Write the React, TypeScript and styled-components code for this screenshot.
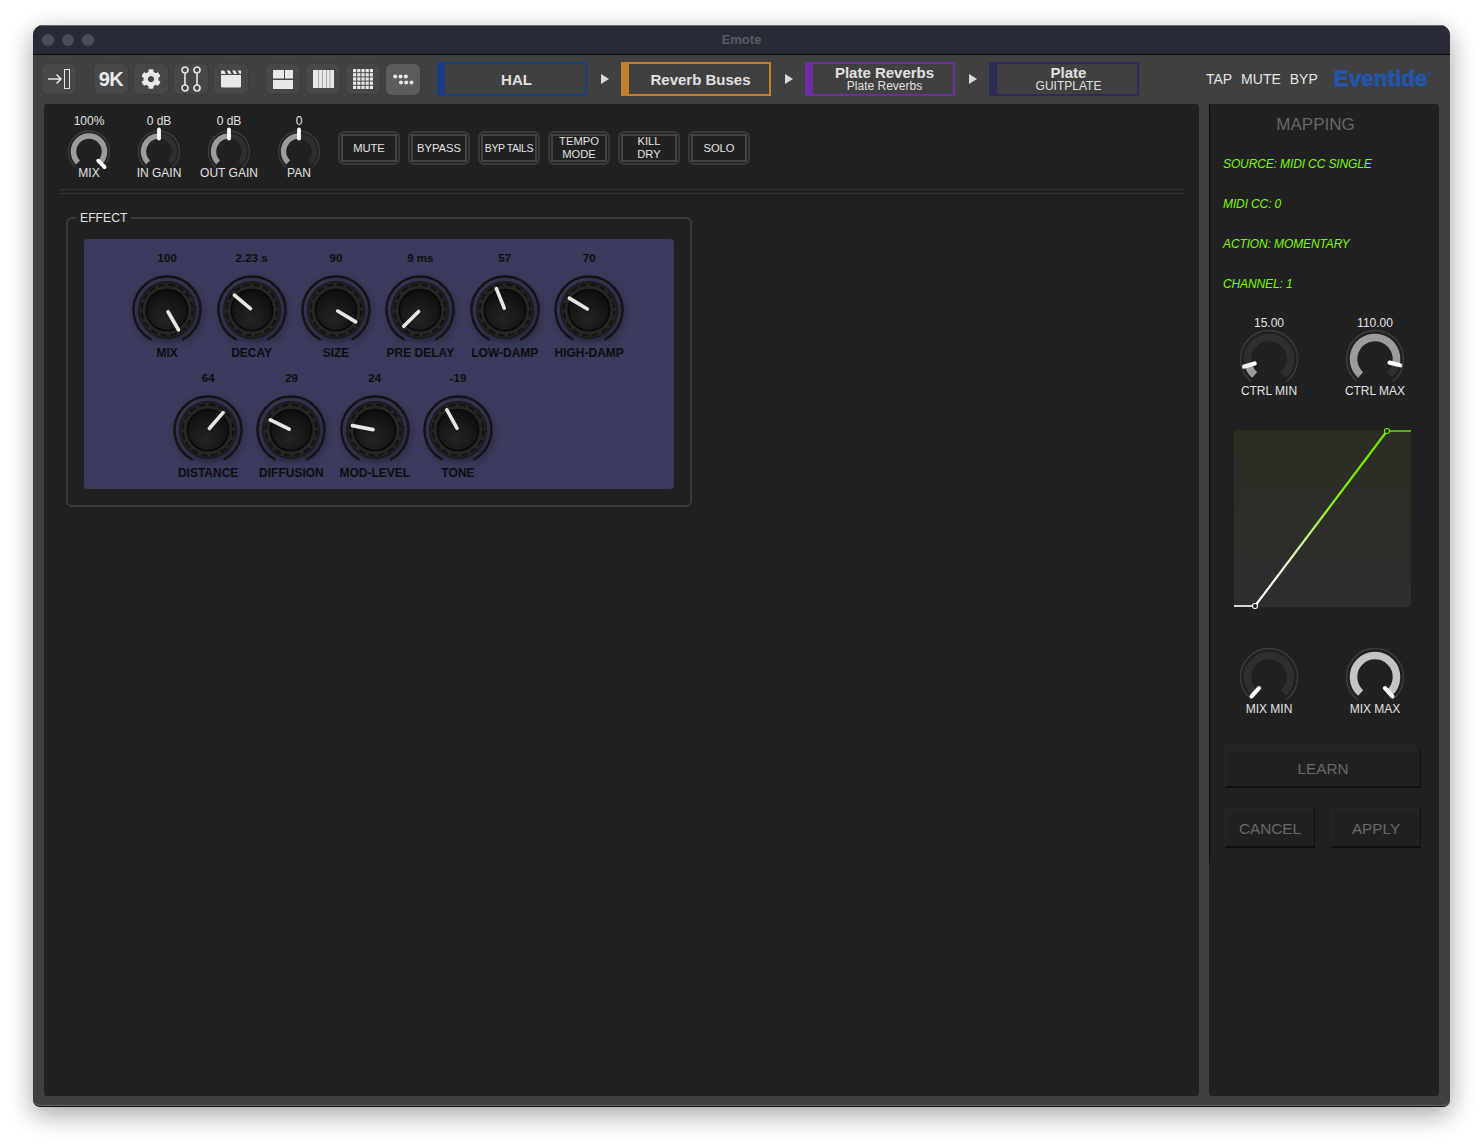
import React from "react";
import styled, { createGlobalStyle } from "styled-components";
import { FaCog } from "react-icons/fa";

const GlobalStyle = createGlobalStyle`
  html, body {
    margin: 0;
    height: 1148px;
    background: #fff;
    overflow: hidden;
    font-family: "Liberation Sans", Arial, sans-serif;
  }
  * { box-sizing: border-box; }
`;

const polar = (cx: number, cy: number, r: number, deg: number) => {
  const a = ((deg - 90) * Math.PI) / 180;
  return [cx + r * Math.cos(a), cy + r * Math.sin(a)];
};

const arc = (cx: number, cy: number, r: number, from: number, to: number) => {
  const [x1, y1] = polar(cx, cy, r, from);
  const [x2, y2] = polar(cx, cy, r, to);
  return `M${x1} ${y1}A${r} ${r} 0 ${to - from > 180 ? 1 : 0} 1 ${x2} ${y2}`;
};

type RingProps = {
  angle: number;
  large?: boolean;
  valueColor?: string;
};

/* flat grey knob used in the top strip and the mapping panel */
function RingKnob({ angle, large, valueColor = "#9c9c9c" }: RingProps) {
  const w = large ? 58 : 42;
  const h = large ? 54 : 38;
  const cx = w / 2;
  const cy = large ? 29 : 23.5;
  const outer = large ? 28.5 : 20.5;
  const mid = large ? 21.5 : 15.5;
  const stroke = large ? 7.5 : 5.5;
  const sweep = large ? 138 : 135;
  const [x1, y1] = polar(cx, cy, large ? 15 : 13, angle);
  const [x2, y2] = polar(cx, cy, large ? 26 : 22, angle);
  return (
    <RingSvg width={w} height={h} viewBox={`0 0 ${w} ${h}`}>
      <path d={arc(cx, cy, outer, -sweep - 4, sweep + 4)} fill="none" stroke="#3c3c3c" strokeWidth="1.4" />
      <path d={arc(cx, cy, mid, -sweep, sweep)} fill="none" stroke="#2f2f2f" strokeWidth={stroke} />
      {angle > -sweep && (
        <path d={arc(cx, cy, mid, -sweep, angle)} fill="none" stroke={valueColor} strokeWidth={stroke} />
      )}
      <line x1={x1} y1={y1} x2={x2} y2={y2} stroke="#fff" strokeWidth={large ? 4.2 : 3.8} strokeLinecap="round" />
    </RingSvg>
  );
}

/* black ribbed hardware knob of the effect panel */
function DialKnob({ angle }: { angle: number }) {
  const id = React.useId();
  const c = 36;
  const [x1, y1] = polar(c, c, 2, angle);
  const [x2, y2] = polar(c, c, 23, angle);
  return (
    <DialSvg width="72" height="72" viewBox="0 0 72 72">
      <defs>
        <radialGradient id={id} cx="45%" cy="70%" r="70%">
          <stop offset="0%" stopColor="#242424" />
          <stop offset="100%" stopColor="#0d0d0d" />
        </radialGradient>
      </defs>
      <path d={arc(c, c, 33.5, -151, 151)} fill="none" stroke="#141414" strokeWidth="2.4" strokeLinecap="round" />
      <circle cx={c} cy={c} r="29" fill="#1b1b1b" />
      <circle cx={c} cy={c} r="24.6" fill="none" stroke="#252525" strokeWidth="5.5" />
      <circle cx={c} cy={c} r="25.4" fill="none" stroke="#121212" strokeWidth="2" strokeDasharray="6.500 3.500" />
      <circle cx={c} cy={c} r="20.500" fill={`url(#${id})`} stroke="#060606" strokeWidth="1.200" />
      <line x1={x1} y1={y1} x2={x2} y2={y2} stroke="#e6e6e6" strokeWidth="3.6" strokeLinecap="round" />
    </DialSvg>
  );
}

const topKnobs = [
  { value: "100%", label: "MIX", angle: 135 },
  { value: "0 dB", label: "IN GAIN", angle: 0 },
  { value: "0 dB", label: "OUT GAIN", angle: 0 },
  { value: "0", label: "PAN", angle: 0 },
];

const triggers = [
  { label: "MUTE" },
  { label: "BYPASS" },
  { label: "BYP TAILS", tight: true },
  { label: "TEMPO MODE", wrap: true },
  { label: "KILL DRY", wrap: true },
  { label: "SOLO" },
];

const effectRows = [
  [
    { value: "100", label: "MIX", angle: 150 },
    { value: "2.23 s", label: "DECAY", angle: -50 },
    { value: "90", label: "SIZE", angle: 121 },
    { value: "9 ms", label: "PRE DELAY", angle: -135 },
    { value: "57", label: "LOW-DAMP", angle: -22 },
    { value: "70", label: "HIGH-DAMP", angle: -59 },
  ],
  [
    { value: "64", label: "DISTANCE", angle: 41 },
    { value: "29", label: "DIFFUSION", angle: -64 },
    { value: "24", label: "MOD-LEVEL", angle: -79 },
    { value: "-19", label: "TONE", angle: -29 },
  ],
];

const crumbs = [
  { title: "HAL", color: "#1a3c80" },
  { title: "Reverb Buses", color: "#c47f2b" },
  { title: "Plate Reverbs", sub: "Plate Reverbs", color: "#6d2f9f" },
  { title: "Plate", sub: "GUITPLATE", color: "#2b2a58" },
];

const mappingLines = ["SOURCE: MIDI CC SINGLE", "MIDI CC: 0", "ACTION: MOMENTARY", "CHANNEL: 1"];

export default function App() {
  return (
    <Window>
      <GlobalStyle />
      <TitleBar>
        <Lights>
          <Light />
          <Light />
          <Light />
        </Lights>
        <WindowTitle>Emote</WindowTitle>
      </TitleBar>

      <Toolbar>
        <ToolButton>
          <svg width="24" height="22" viewBox="0 0 24 22" fill="none" stroke="#e4e4e4">
            <path d="M1 11h13M9.5 6.5 14 11l-4.500 4.500" strokeWidth="1.5" />
            <rect x="17.500" y="1.500" width="5" height="19" strokeWidth="1" />
          </svg>
        </ToolButton>

        <ToolGroup>
          <ToolButton>
            <NineK>9K</NineK>
          </ToolButton>
          <ToolButton>
            <FaCog size={20} color="#e8e8e8" />
          </ToolButton>
          <ToolButton>
            <svg width="20" height="26" viewBox="0 0 20 26" fill="none" stroke="#e0e0e0" strokeWidth="1.7">
              <circle cx="4" cy="4" r="3" />
              <circle cx="16" cy="4" r="3" />
              <circle cx="4" cy="22" r="3" />
              <circle cx="16" cy="22" r="3" />
              <path d="M4 7v12M16 7v12" />
            </svg>
          </ToolButton>
          <ToolButton>
            <svg width="22" height="18" viewBox="0 0 22 18">
              <path d="M1 5h20v11.500a1 1 0 0 1-1 1H2a1 1 0 0 1-1-1z" fill="#e8e8e8" />
              <path d="M1 .5h20V4H1z" fill="#e8e8e8" />
              <path d="M4 0h2.500l2 4H6zM9.500 0H12l2 4h-2.500zM15 0h2.500l2 4H17z" fill="#444" />
            </svg>
          </ToolButton>
        </ToolGroup>

        <ToolGroup>
          <ToolButton>
            <svg width="20" height="19" viewBox="0 0 20 19" fill="#e8e8e8">
              <rect width="11" height="8.500" />
              <rect x="12" width="8" height="8.500" />
              <rect y="10" width="20" height="9" />
            </svg>
          </ToolButton>
          <ToolButton>
            <svg width="21" height="18" viewBox="0 0 21 18">
              <rect width="21" height="18" fill="#e8e8e8" />
              <path d="M5.500 0v18M9.500 0v18M13.500 0v18M17 0v18" stroke="#a8a8a8" strokeWidth="1" />
            </svg>
          </ToolButton>
          <ToolButton>
            <svg width="20" height="20" viewBox="0 0 20 20" fill="#e8e8e8">
              {[0, 4.200, 8.400, 12.600, 16.800].map((y) =>
                [0, 4.200, 8.400, 12.600, 16.800].map((x) => (
                  <rect key={`${x}-${y}`} x={x} y={y} width="3.200" height="3.200" />
                )),
              )}
            </svg>
          </ToolButton>
          <ToolButton $active>
            <svg width="21" height="11" viewBox="0 0 21 11" fill="#e8e8e8">
              <circle cx="2.200" cy="2.500" r="2" />
              <circle cx="7.500" cy="2.500" r="2" />
              <circle cx="12.800" cy="2.500" r="2" />
              <circle cx="8" cy="8.500" r="2" />
              <circle cx="13.200" cy="8.500" r="2" />
              <circle cx="18.500" cy="8.500" r="2" />
            </svg>
          </ToolButton>
        </ToolGroup>

        <Crumbs>
          {crumbs.map((c, i) => (
            <React.Fragment key={c.title}>
              {i > 0 && (
                <CrumbArrow>
                  <svg width="8" height="10" viewBox="0 0 8 10">
                    <path d="M0 0l8 5-8 5z" fill="#d8d8d8" />
                  </svg>
                </CrumbArrow>
              )}
              <Crumb $color={c.color}>
                <CrumbTitle>{c.title}</CrumbTitle>
                {c.sub && <CrumbSub>{c.sub}</CrumbSub>}
              </Crumb>
            </React.Fragment>
          ))}
        </Crumbs>

        <RightTools>
          <ToolLink>TAP</ToolLink>
          <ToolLink>MUTE</ToolLink>
          <ToolLink>BYP</ToolLink>
          <Logo>
            Eventide<LogoMark>®</LogoMark>
          </Logo>
        </RightTools>
      </Toolbar>

      <Main>
        <LeftPanel>
          <Strip>
            {topKnobs.map((k) => (
              <StripKnob key={k.label}>
                <LightText>{k.value}</LightText>
                <RingKnob angle={k.angle} />
                <LightText>{k.label}</LightText>
              </StripKnob>
            ))}
            <Triggers>
              {triggers.map((t) => (
                <TriggerOuter key={t.label}>
                  <TriggerInner $wrap={t.wrap} $tight={t.tight}>
                    {t.label}
                  </TriggerInner>
                </TriggerOuter>
              ))}
            </Triggers>
          </Strip>
          <Divider />

          <EffectBox>
            <EffectLegend>EFFECT</EffectLegend>
            <EffectPanel>
              {effectRows.map((row, i) => (
                <EffectRow key={i} $second={i === 1}>
                  {row.map((k) => (
                    <EffectKnob key={k.label} $second={i === 1}>
                      <EffectValue>{k.value}</EffectValue>
                      <DialKnob angle={k.angle} />
                      <EffectLabel>{k.label}</EffectLabel>
                    </EffectKnob>
                  ))}
                </EffectRow>
              ))}
            </EffectPanel>
          </EffectBox>
        </LeftPanel>

        <RightPanel>
          <MappingBody>
            <MappingTitle>MAPPING</MappingTitle>
            {mappingLines.map((line) => (
              <MappingLine key={line}>{line}</MappingLine>
            ))}

            <KnobPair>
              <PairKnob>
                <LightText>15.00</LightText>
                <RingKnob large angle={-107} />
                <LightText>CTRL MIN</LightText>
              </PairKnob>
              <PairKnob>
                <LightText>110.00</LightText>
                <RingKnob large angle={104} />
                <LightText>CTRL MAX</LightText>
              </PairKnob>
            </KnobPair>

            <CurveBox>
              <svg width="177" height="177" viewBox="0 0 177 177">
                <defs>
                  <linearGradient id="curveLine" gradientUnits="userSpaceOnUse" x1="21" y1="176" x2="153" y2="1">
                    <stop offset="0%" stopColor="#ffffff" />
                    <stop offset="20%" stopColor="#f0f8e0" />
                    <stop offset="65%" stopColor="#80f000" />
                    <stop offset="100%" stopColor="#70e800" />
                  </linearGradient>
                </defs>
                <path d="M21 176 153 1" fill="none" stroke="url(#curveLine)" strokeWidth="2.200" />
                <path d="M0 176h21" stroke="#fff" strokeWidth="1.600" />
                <path d="M153 1h24" stroke="#78ee00" strokeWidth="1.300" />
                <circle cx="21" cy="176" r="2.500" fill="#111" stroke="#fff" strokeWidth="1.100" />
                <circle cx="153" cy="1" r="2.500" fill="#222" stroke="#78ee00" strokeWidth="1.100" />
              </svg>
            </CurveBox>

            <KnobPair $compact>
              <PairKnob>
                <RingKnob large angle={-138} />
                <LightText>MIX MIN</LightText>
              </PairKnob>
              <PairKnob>
                <RingKnob large angle={138} valueColor="#c4c4c4" />
                <LightText>MIX MAX</LightText>
              </PairKnob>
            </KnobPair>

            <Actions>
              <ActionButton $span>LEARN</ActionButton>
              <ActionButton>CANCEL</ActionButton>
              <ActionButton>APPLY</ActionButton>
            </Actions>
          </MappingBody>
        </RightPanel>
      </Main>
    </Window>
  );
}

const Window = styled.div`
  width: 1417px;
  height: 1081px;
  margin: 25px 0 0 33px;
  display: flex;
  flex-direction: column;
  background: #404040;
  border-radius: 10px 10px 7px 7px;
  overflow: hidden;
  box-shadow: inset 0 -1px 0 #666, 0 1px 0 #111, 0 8px 26px rgba(0, 0, 0, 0.38);
`;

const TitleBar = styled.div`
  height: 30px;
  flex: none;
  padding-bottom: 2px;
  display: flex;
  align-items: center;
  justify-content: center;
  position: relative;
  background: #272b35;
  border-top: 1px solid #6a6a6e;
  border-bottom: 1px solid #0c0c0c;
`;

const Lights = styled.div`
  position: absolute;
  left: 9px;
  top: 8px;
  display: flex;
  gap: 8px;
`;

const Light = styled.span`
  width: 12px;
  height: 12px;
  border-radius: 50%;
  background: #484c57;
`;

const WindowTitle = styled.span`
  font-size: 13px;
  font-weight: 700;
  color: #585b62;
`;

const Toolbar = styled.div`
  height: 49px;
  flex: none;
  padding: 0 18px 1px 8px;
  display: flex;
  align-items: center;
`;

const ToolGroup = styled.div`
  display: flex;
  gap: 4px;
  margin-left: 16px;
`;

const ToolButton = styled.div<{ $active?: boolean }>`
  width: ${(p) => (p.$active ? "34px" : "36px")};
  height: ${(p) => (p.$active ? "31px" : "32px")};
  margin: ${(p) => (p.$active ? "0.5px 0 0 1px" : "0")};
  border-radius: 6px;
  display: flex;
  align-items: center;
  justify-content: center;
  background: ${(p) => (p.$active ? "#5c5c5c" : "#474747")};
  box-shadow: ${(p) => (p.$active ? "none" : "inset 0 0 0 1px #3b3b3b")};
`;

const NineK = styled.span`
  font-size: 20px;
  font-weight: 700;
  letter-spacing: -0.5px;
  color: #e8e8e8;
`;

const Crumbs = styled.div`
  display: flex;
  align-items: center;
  margin-left: 17px;
`;

const Crumb = styled.div<{ $color: string }>`
  width: 150px;
  height: 34px;
  padding-left: 3px;
  display: flex;
  flex-direction: column;
  align-items: center;
  justify-content: center;
  color: #e0e0e0;
  border: 2px solid ${(p) => p.$color};
  border-left-width: 8px;
`;

const CrumbTitle = styled.div`
  font-size: 15px;
  line-height: 15px;
  font-weight: 700;
`;

const CrumbSub = styled.div`
  margin-bottom: 2px;
  font-size: 12px;
  line-height: 12px;
`;

const CrumbArrow = styled.div`
  width: 34px;
  padding-left: 1px;
  display: flex;
  justify-content: center;
`;

const RightTools = styled.div`
  margin-left: auto;
  display: flex;
  align-items: center;
  gap: 9px;
`;

const ToolLink = styled.span`
  font-size: 14px;
  color: #e4e4e4;
`;

const Logo = styled.span`
  margin-left: 7px;
  font-size: 22.5px;
  font-weight: 700;
  line-height: 24px;
  color: #2456ac;
  -webkit-text-stroke: 0.8px #2456ac;
  display: flex;
`;

const LogoMark = styled.span`
  font-size: 6px;
  line-height: 14px;
  -webkit-text-stroke: 0;
`;

const Main = styled.div`
  flex: 1;
  padding: 0 11px 10px;
  display: flex;
  gap: 10px;
  min-height: 0;
`;

const LeftPanel = styled.div`
  flex: 1;
  background: #212121;
  border-radius: 3px;
`;

const Strip = styled.div`
  padding: 10px 0 0 10px;
  display: flex;
  height: 85px;
`;

const StripKnob = styled.div`
  width: 70px;
  display: flex;
  flex-direction: column;
  align-items: center;
`;

const LightText = styled.div`
  font-size: 12px;
  line-height: 14px;
  color: #e2e2e2;
  white-space: nowrap;
`;

const RingSvg = styled.svg`
  display: block;
  overflow: visible;
`;

const Triggers = styled.div`
  margin: 17px 0 0 4px;
  display: flex;
  gap: 8px;
`;

const TriggerOuter = styled.div`
  width: 62px;
  height: 34px;
  padding: 1px;
  border: 2px solid #3a3a3a;
  border-radius: 6px;
`;

const TriggerInner = styled.div<{ $wrap?: boolean; $tight?: boolean }>`
  height: 100%;
  display: flex;
  align-items: center;
  justify-content: center;
  text-align: center;
  border: 2px solid #444;
  font-size: ${(p) => (p.$tight ? "10.5px" : "11.2px")};
  letter-spacing: ${(p) => (p.$tight ? "-0.4px" : "0")};
  line-height: 13px;
  color: #e2e2e2;
  white-space: ${(p) => (p.$wrap ? "normal" : "nowrap")};
  padding: ${(p) => (p.$wrap ? "0 6px" : "0")};
`;

const Divider = styled.div`
  height: 5px;
  margin: 0 15px;
  border-top: 1px solid #353535;
  border-bottom: 1px solid #353535;
`;

const EffectBox = styled.fieldset`
  width: 626px;
  margin: 17px 0 0 22px;
  padding: 14px 16px 16px;
  border: 2px solid #3a3a3a;
  border-radius: 6px;
`;

const EffectLegend = styled.legend`
  margin-left: -8px;
  padding: 0 4px;
  font-size: 12.2px;
  line-height: 14px;
  color: #e2e2e2;
`;

const EffectPanel = styled.div`
  height: 250px;
  padding-top: 12px;
  display: flex;
  flex-direction: column;
  gap: 11px;
  background: #3a3a5c;
  border-radius: 4px;
`;

const EffectRow = styled.div<{ $second?: boolean }>`
  display: flex;
  padding-left: ${(p) => (p.$second ? "82.500px" : "41px")};
`;

const EffectKnob = styled.div<{ $second?: boolean }>`
  width: ${(p) => (p.$second ? "83.300px" : "84.400px")};
  display: flex;
  flex-direction: column;
  align-items: center;
`;

const EffectValue = styled.div`
  margin-bottom: 9px;
  font-size: 11.5px;
  font-weight: 700;
  line-height: 14px;
  color: #0e0e0e;
  white-space: nowrap;
`;

const EffectLabel = styled.div`
  font-size: 12px;
  font-weight: 700;
  line-height: 14px;
  color: #0e0e0e;
  white-space: nowrap;
`;

const DialSvg = styled.svg`
  display: block;
  overflow: visible;
  filter: drop-shadow(2px 3px 3px rgba(0, 0, 0, 0.35));
`;

const RightPanel = styled.div`
  width: 230px;
  background: #212121;
  border-radius: 3px;
`;

const MappingBody = styled.div`
  height: 759px;
  padding-top: 11px;
  border-left: 1px solid #0a0a0a;
`;

const MappingTitle = styled.div`
  padding-right: 18px;
  margin-bottom: 9px;
  text-align: center;
  font-size: 17px;
  line-height: 20px;
  color: #666;
`;

const MappingLine = styled.div`
  height: 40px;
  padding-left: 13px;
  display: flex;
  align-items: center;
  font-size: 12px;
  font-style: italic;
  letter-spacing: -0.12px;
  color: #7cf800;
`;

const KnobPair = styled.div<{ $compact?: boolean }>`
  margin-top: ${(p) => (p.$compact ? "41px" : "12px")};
  padding-left: 6px;
  display: flex;
`;

const PairKnob = styled.div`
  width: 106px;
  display: flex;
  flex-direction: column;
  align-items: center;
`;

const CurveBox = styled.div`
  width: 177px;
  height: 177px;
  margin: 32px 0 0 24px;
  background: linear-gradient(180deg, #2a2e22, #2e2e2e);

  svg {
    display: block;
    overflow: visible;
  }
`;

const Actions = styled.div`
  width: 196px;
  margin: 32px 0 0 15px;
  display: grid;
  grid-template-columns: 90px 90px;
  column-gap: 16px;
  row-gap: 20px;
`;

const ActionButton = styled.div<{ $span?: boolean }>`
  grid-column: ${(p) => (p.$span ? "1 / -1" : "auto")};
  height: 40px;
  padding-top: 2px;
  display: flex;
  align-items: center;
  justify-content: center;
  font-size: 15.3px;
  color: #686868;
  background: #212121;
  border: 1px solid #262626;
  border-right-color: #111;
  border-bottom: 2px solid #101010;
`;
